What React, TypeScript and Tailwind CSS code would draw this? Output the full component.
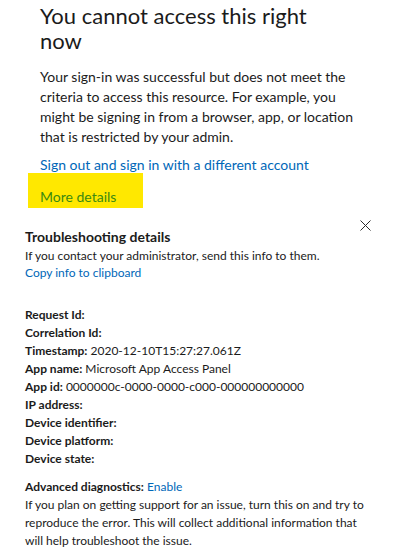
import React from "react";

const font = { fontFamily: '"Lato", "Noto Sans", sans-serif' };

function Row({ label, value }: { label: string; value?: string }) {
  return (
    <div className="h-[18px] leading-[18px] whitespace-nowrap">
      <span className="font-bold text-[#1b1b1b]">{label}:</span>
      {value ? <span className="text-[#1b1b1b]"> {value}</span> : null}
    </div>
  );
}

export default function App() {
  return (
    <div className="w-[395px] h-[556px] bg-white overflow-hidden text-[#1b1b1b]" style={font}>
      <div className="pl-[40px] pr-[10px] pt-[3px]">
        <h1 className="text-[22px] leading-[25px] font-normal text-[#1b1b1b]">
          You cannot access this right
          <br />
          now
        </h1>
        <p className="mt-[14px] text-[14px] leading-[20px] text-[#1b1b1b] whitespace-nowrap">
          Your sign-in was successful but does not meet the
          <br />
          criteria to access this resource. For example, you
          <br />
          might be signing in from a browser, app, or location
          <br />
          that is restricted by your admin.
        </p>
        <div className="mt-[8px] text-[14px] leading-[20px] text-[#0067b8] whitespace-nowrap">
          Sign out and sign in with a different account
        </div>
      </div>
      <div className="ml-[28px] -mt-[2px] w-[115px] h-[35px] bg-[#ffe800] pl-[12px] pt-[14px]">
        <div className="text-[14px] leading-[20px] text-[#3b8a12] whitespace-nowrap">More details</div>
      </div>
      <div className="relative pl-[25px] pr-[10px] pt-[19px]">
        <button className="absolute right-[24px] top-[12px] w-[11px] h-[11px] p-0" aria-label="Close">
          <svg viewBox="0 0 11 11" width="11" height="11" className="block">
            <path d="M0.5 0.5 L10.5 10.5 M10.5 0.5 L0.5 10.5" stroke="#2b2b2b" strokeWidth="1" fill="none" />
          </svg>
        </button>
        <div className="text-[14px] leading-[20px] font-bold text-[#1b1b1b]">Troubleshooting details</div>
        <div className="text-[12px] leading-[17px] text-[#1b1b1b] whitespace-nowrap">
          If you contact your administrator, send this info to them.
        </div>
        <div className="text-[12px] leading-[17px] text-[#0067b8]">Copy info to clipboard</div>
        <div className="mt-[25px] text-[12px]">
          <Row label="Request Id" />
          <Row label="Correlation Id" />
          <Row label="Timestamp" value="2020-12-10T15:27:27.061Z" />
          <Row label="App name" value="Microsoft App Access Panel" />
          <Row label="App id" value="0000000c-0000-0000-c000-000000000000" />
          <Row label="IP address" />
          <Row label="Device identifier" />
          <Row label="Device platform" />
          <Row label="Device state" />
        </div>
        <div className="mt-[10px] text-[12px] leading-[18px] whitespace-nowrap">
          <span className="font-bold">Advanced diagnostics:</span>{" "}
          <span className="text-[#0067b8]">Enable</span>
        </div>
        <p className="text-[12px] leading-[18px] whitespace-nowrap">
          If you plan on getting support for an issue, turn this on and try to
          <br />
          reproduce the error. This will collect additional information that
          <br />
          will help troubleshoot the issue.
        </p>
      </div>
    </div>
  );
}
